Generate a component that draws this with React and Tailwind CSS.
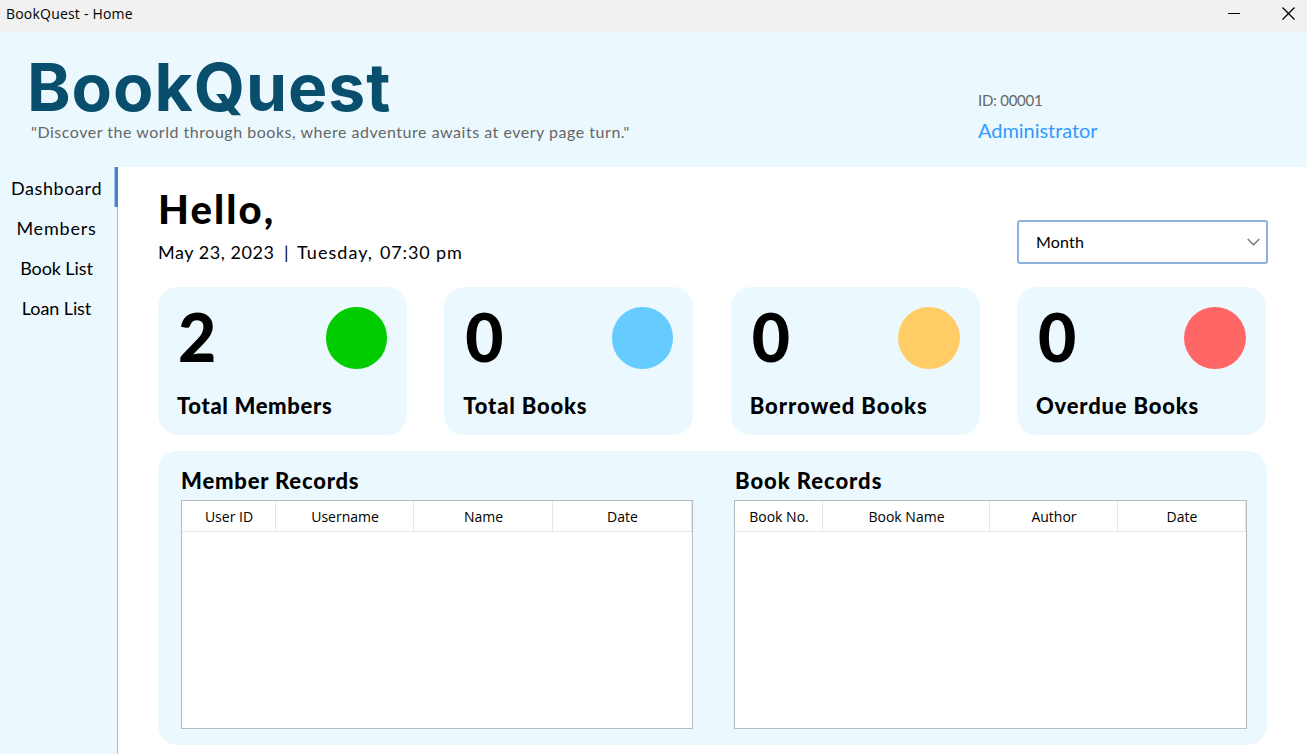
import React from "react";

const navItems = [
  { label: "Dashboard", style: "tracking-[0.6px]", active: true },
  { label: "Members", style: "tracking-[0.8px]" },
  { label: "Book List", style: "tracking-[-0.1px]" },
  { label: "Loan List", style: "tracking-[-0.1px]" },
];

const stats = [
  { value: "2", label: "Total Members", color: "bg-[#00cc00]", style: "tracking-[0.65px]", valueStyle: "pl-px" },
  { value: "0", label: "Total Books", color: "bg-[#66ccff]", style: "tracking-[0.8px]", valueStyle: "pl-0.5" },
  { value: "0", label: "Borrowed Books", color: "bg-[#ffcc66]", style: "tracking-[0.95px]", valueStyle: "pl-0.5" },
  { value: "0", label: "Overdue Books", color: "bg-[#ff6666]", style: "tracking-[0.8px]", valueStyle: "pl-0.5" },
];

const memberColumns = [
  { label: "User ID", width: "w-[94px]" },
  { label: "Username", width: "w-[138px]" },
  { label: "Name", width: "w-[139px]" },
  { label: "Date", width: "w-[139px]" },
];

const bookColumns = [
  { label: "Book No.", width: "w-[88px]" },
  { label: "Book Name", width: "w-[167px]" },
  { label: "Author", width: "w-[128px]" },
  { label: "Date", width: "w-[128px]" },
];

function TitleBar() {
  return (
    <header className="flex h-8 shrink-0 items-start justify-between bg-[#f1f1f1] pl-[6px] pr-3">
      <h1 className="h-7 font-['Open_Sans',sans-serif] text-[14px] leading-[27px] tracking-[0.2px]">BookQuest - Home</h1>
      <div className="flex h-[26px] items-center gap-[42px]">
        <svg width="12" height="12" viewBox="0 0 12 12" stroke="#000" fill="none" aria-label="Minimize">
          <path d="M0 6.5H12" />
        </svg>
        <svg width="13" height="13" viewBox="0 0 13 13" stroke="#000" strokeWidth="1.3" fill="none" aria-label="Close">
          <path d="M.5.5 12.5 12.5M12.5.5.5 12.5" />
        </svg>
      </div>
    </header>
  );
}

function Banner() {
  return (
    <div className="flex h-[135px] shrink-0 justify-between bg-[#ebf9ff]">
      <div className="flex flex-col pl-[27px] pt-[21px]">
        <div className="h-[69px] whitespace-nowrap font-['Inter',sans-serif] text-[66px] font-bold leading-[68px] tracking-[0.95px] text-[#094f6d]">BookQuest</div>
        <p className="h-6 whitespace-nowrap pl-1 text-[16px] leading-[20px] tracking-[0.52px] text-[#666]">
          "Discover the world through books, where adventure awaits at every page turn."
        </p>
      </div>
      <div className="flex w-[329px] flex-col pt-14">
        <div className="h-6 text-[15px] leading-6 tracking-[-0.25px] text-[#666]">ID: 00001</div>
        <div className="h-9 text-[20px] leading-9 tracking-[-0.05px] text-[#3399ff]">Administrator</div>
      </div>
    </div>
  );
}

function Sidebar() {
  return (
    <nav className="flex w-[118px] shrink-0 flex-col border-r border-[#b9bcbf] bg-[#ebf9ff]">
      {navItems.map((item) => (
        <div key={item.label} className="flex h-10">
          <a className={`mr-px block w-[113px] shrink-0 text-center text-[18px] leading-[42px] ${item.style}`}>{item.label}</a>
          {item.active && <span className="-mr-px w-1 shrink-0 border-l border-[#a3c8ea] bg-[#4285c8]" />}
        </div>
      ))}
    </nav>
  );
}

function StatCard({ value, label, color, style, valueStyle }) {
  return (
    <section className="flex h-[148px] w-[249px] flex-col rounded-[20px] bg-[#ebf9ff] pl-[19px] pr-5 pt-5">
      <div className="flex h-[62px] items-start justify-between">
        <span className={`text-[66px] font-black leading-[60px] ${valueStyle}`}>{value}</span>
        <span className={`size-[61.5px] rounded-full ${color}`} />
      </div>
      <h3 className={`mt-[23px] whitespace-nowrap text-[22px] font-black leading-[28px] ${style}`}>{label}</h3>
    </section>
  );
}

function RecordTable({ title, columns, width, titleStyle }) {
  return (
    <section className={`flex flex-col ${width}`}>
      <h2 className={`h-[31px] text-[22px] font-black leading-[24px] ${titleStyle}`}>{title}</h2>
      <div className="h-[229px] border border-[#b9bcbf] bg-white">
        <div className="flex h-[31px] border-b border-[#e5e5e5] font-['Open_Sans',sans-serif] text-[14px]">
          {columns.map((c) => (
            <div key={c.label} className={`shrink-0 border-r border-[#e5e5e5] pl-px text-center leading-8 ${c.width}`}>
              {c.label}
            </div>
          ))}
        </div>
      </div>
    </section>
  );
}

export default function App() {
  return (
    <div className="flex h-[754px] w-[1307px] flex-col overflow-hidden bg-white font-['Lato',sans-serif] text-black">
      <TitleBar />
      <Banner />
      <div className="flex min-h-0 grow">
        <Sidebar />
        <main className="flex grow flex-col pl-10 pt-[19px]">
          <div className="flex h-[101px] w-[1110px] justify-between">
            <div>
              <h2 className="h-[50px] text-[40px] font-black leading-[46px] tracking-[2.1px]">Hello,</h2>
              <p className="flex text-[18px] leading-8">
                <span className="w-[126px] tracking-[0.55px]">May 23, 2023</span>
                <span className="w-[13px]">|</span>
                <span className="w-[83px] tracking-[1.05px]">Tuesday,</span>
                <span className="whitespace-nowrap tracking-[0.85px]">07:30 pm</span>
              </p>
            </div>
            <div className="mt-[34px] flex h-[44px] w-[251px] items-center justify-between rounded-[3px] border-2 border-[#8cb2dc] bg-white pl-[17px] pr-[6px]">
              <span className="text-[16px] tracking-[0.2px]">Month</span>
              <svg width="13" height="8" viewBox="0 0 13 8" fill="none" stroke="#777" strokeWidth="1.4">
                <path d="M.7 1 6.5 6.7 12.3 1" />
              </svg>
            </div>
          </div>
          <div className="flex w-[1108px] justify-between">
            {stats.map((s) => (
              <StatCard key={s.label} {...s} />
            ))}
          </div>
          <div className="mt-4 flex h-[294px] w-[1109px] shrink-0 justify-between rounded-[20px] bg-[#ebf9ff] pl-[23px] pr-5 pt-[18px]">
            <RecordTable title="Member Records" columns={memberColumns} width="w-[512px]" titleStyle="tracking-[0.8px]" />
            <RecordTable title="Book Records" columns={bookColumns} width="w-[513px]" titleStyle="pl-px tracking-[0.95px]" />
          </div>
        </main>
      </div>
    </div>
  );
}
